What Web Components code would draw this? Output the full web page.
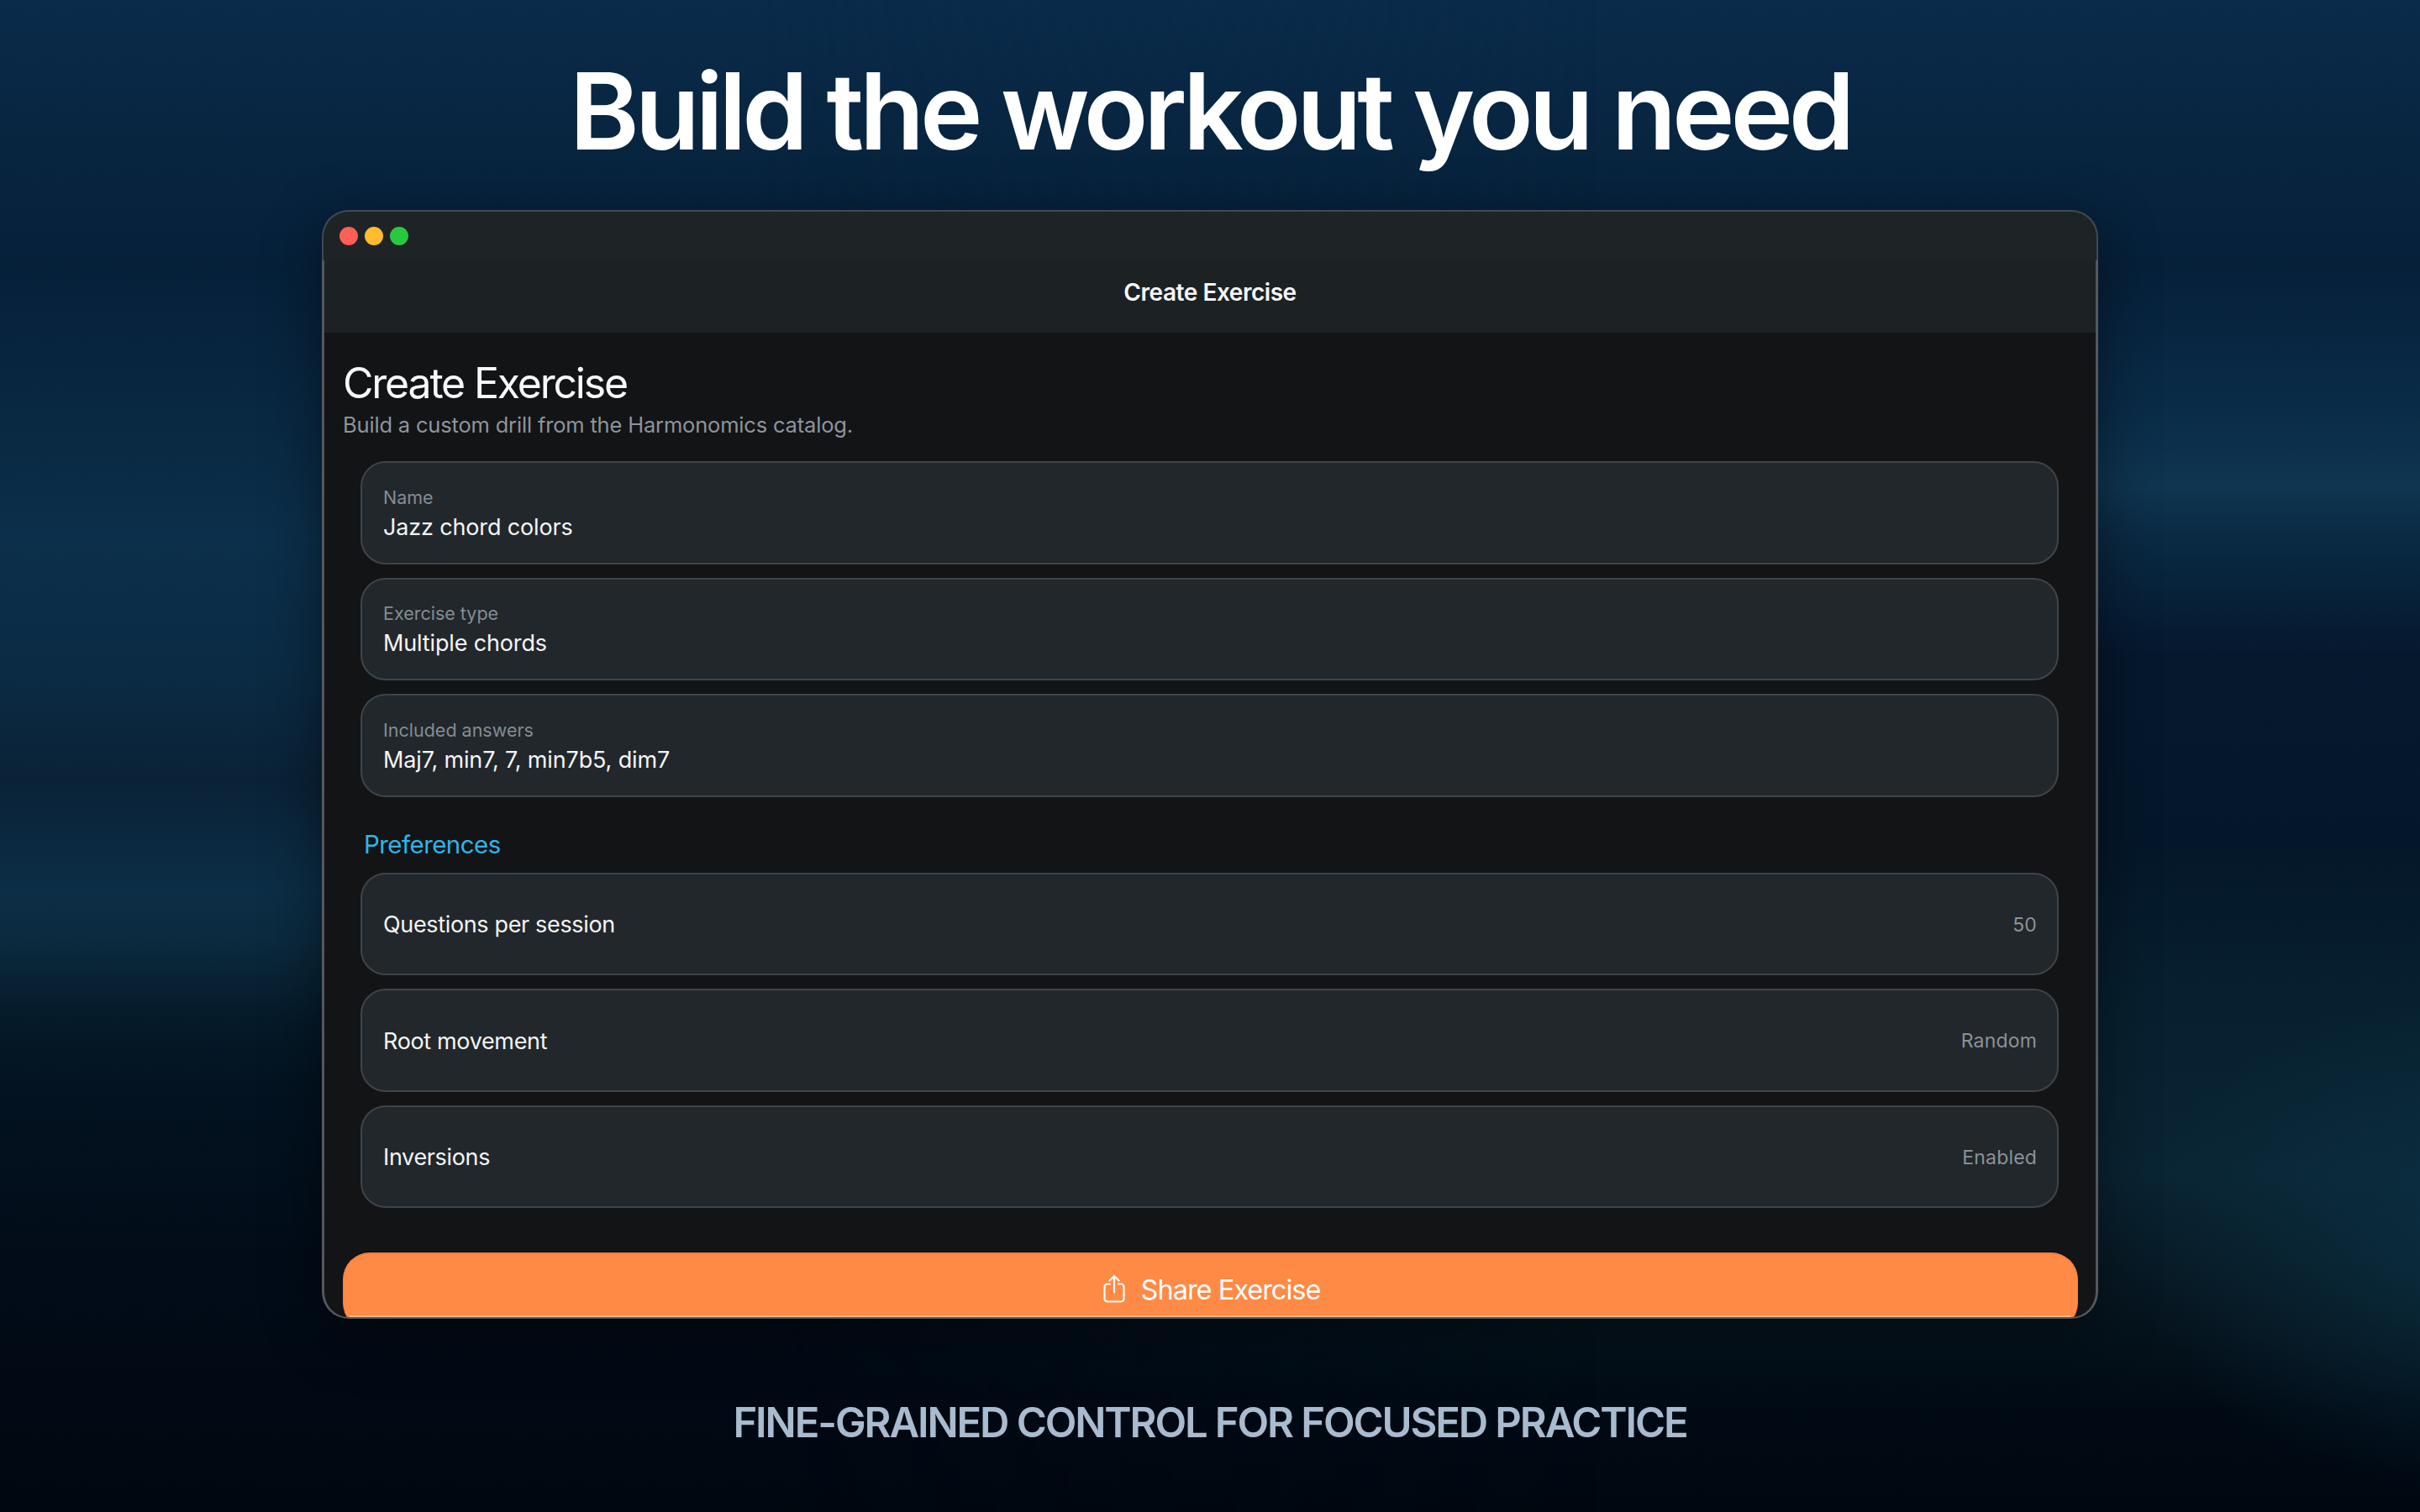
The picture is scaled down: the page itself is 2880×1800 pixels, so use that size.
<!DOCTYPE html>
<html lang="en">
<head>
<meta charset="utf-8">
<title>Build the workout you need</title>
<style>
  html, body { margin: 0; padding: 0; background: #01070f; }
</style>
</head>
<body>
<promo-page heading="Build the workout you need" caption="FINE-GRAINED CONTROL FOR FOCUSED PRACTICE">
  <app-window window-title="Create Exercise">
    <page-heading title-text="Create Exercise" subtitle="Build a custom drill from the Harmonomics catalog."></page-heading>
    <card-list>
      <field-card label="Name" value="Jazz chord colors"></field-card>
      <field-card label="Exercise type" value="Multiple chords"></field-card>
      <field-card label="Included answers" value="Maj7, min7, 7, min7b5, dim7"></field-card>
    </card-list>
    <section-label>Preferences</section-label>
    <card-list>
      <pref-card label="Questions per session" value="50"></pref-card>
      <pref-card label="Root movement" value="Random"></pref-card>
      <pref-card label="Inversions" value="Enabled"></pref-card>
    </card-list>
    <share-button slot="footer">Share Exercise</share-button>
  </app-window>
</promo-page>

<script>
// Fondo y textos grandes de la captura
class PromoPage extends HTMLElement {
  constructor() {
    super();
    const shadow = this.attachShadow({ mode: 'open' });
    shadow.innerHTML = `
      <style>
        :host {
          display: flex;
          flex-direction: column;
          align-items: center;
          position: relative;
          width: 2880px;
          height: 1800px;
          overflow: hidden;
          font-family: Inter, "Liberation Sans", sans-serif;
          background:
            radial-gradient(ellipse 420px 300px at 2960px 1480px, rgba(12, 52, 72, .75), transparent),
            linear-gradient(180deg, #0a2b4b 0, #082540 170px, #06203a 320px, #0a2c48 490px, #0f3550 580px, #0a2a44 640px, #05182e 780px, #04172a 1000px, #07202f 1200px, #0a2433 1400px, #06151f 1560px, #010a14 1680px, #000710 1800px);
        }
        .left {
          position: absolute;
          inset: 0;
          background: linear-gradient(180deg, #0a2b4b 0, #082540 170px, #06203a 320px, #0a2a44 540px, #0c2f4b 640px, #0b2b44 800px, #0a2237 930px, #0c2e46 1060px, #0b2a3e 1120px, #051928 1220px, #031321 1290px, #020c18 1500px, #000710 1800px);
          -webkit-mask-image: linear-gradient(90deg, #000 0, #000 900px, transparent 1900px);
          mask-image: linear-gradient(90deg, #000 0, #000 900px, transparent 1900px);
        }
        h1 {
          position: relative;
          margin: 0;
          height: 250px;
          display: flex;
          align-items: center;
          padding-top: 14px;
          box-sizing: border-box;
          font-size: 126px;
          line-height: 1;
          font-weight: 600;
          letter-spacing: -5.15px;
          color: #ffffff;
        }
        .win { position: relative; display: block; }
        p {
          position: relative;
          margin: 88px 0 0;
          font-size: 49px;
          line-height: 72px;
          font-weight: 600;
          letter-spacing: -2.1px;
          color: #a9bbce;
        }
      </style>
      <div class="left"></div>
      <h1 id="heading"></h1>
      <div class="win"><slot></slot></div>
      <p id="caption"></p>
    `;
  }

  connectedCallback() {
    this.shadowRoot.querySelector('#heading').textContent = this.getAttribute('heading') || '';
    this.shadowRoot.querySelector('#caption').textContent = this.getAttribute('caption') || '';
  }
}

// Ventana de macOS: barra de titulo, cabecera y contenido
class AppWindow extends HTMLElement {
  constructor() {
    super();
    const shadow = this.attachShadow({ mode: 'open' });
    shadow.innerHTML = `
      <style>
        :host {
          display: flex;
          flex-direction: column;
          box-sizing: border-box;
          width: 2114px;
          height: 1320px;
          border-radius: 32px;
          box-shadow: 0 16px 70px rgba(0, 0, 0, .45);
        }
        .chrome {
          box-sizing: border-box;
          height: 60px;
          display: flex;
          align-items: center;
          gap: 8px;
          padding: 0 0 0 19px;
          background: #1e2426;
          border: 2px solid #3e4a55;
          border-bottom: 0;
          border-radius: 32px 32px 0 0;
        }
        .dot { width: 22px; height: 22px; border-radius: 50%; }
        .body {
          position: relative;
          flex: 1;
          min-height: 0;
          display: flex;
          flex-direction: column;
          overflow: hidden;
          background: #131416;
          border: solid #54585c;
          border-width: 0 3px 2px;
          border-radius: 0 0 32px 32px;
        }
        .header {
          height: 86px;
          flex: none;
          display: flex;
          align-items: center;
          justify-content: center;
          padding-bottom: 10px;
          box-sizing: border-box;
          background: #1c2224;
          color: #f6f7f8;
          font-size: 28px;
          font-weight: 600;
          letter-spacing: -.45px;
        }
        .content {
          flex: 1;
          min-height: 0;
          padding: 0 21px 0 22px;
          display: flex;
          flex-direction: column;
        }
        .footer { display: block; flex: none; margin-top: 53px; }
        .edge {
          position: absolute;
          left: 30px;
          right: 30px;
          bottom: 0;
          height: 2px;
          background: #f8bb93;
        }
      </style>
      <div class="chrome">
        <span class="dot" style="background:#ff5f57"></span>
        <span class="dot" style="background:#febc2e"></span>
        <span class="dot" style="background:#28c840"></span>
      </div>
      <div class="body">
        <div class="header" id="title"></div>
        <div class="content">
          <slot></slot>
          <div class="footer"><slot name="footer"></slot></div>
        </div>
        <div class="edge"></div>
      </div>
    `;
  }

  connectedCallback() {
    this.shadowRoot.querySelector('#title').textContent = this.getAttribute('window-title') || '';
  }
}

class PageHeading extends HTMLElement {
  constructor() {
    super();
    const shadow = this.attachShadow({ mode: 'open' });
    shadow.innerHTML = `
      <style>
        :host { display: block; flex: none; padding-top: 32px; height: 153px; box-sizing: border-box; }
        h2 {
          margin: 0;
          font-size: 50px;
          line-height: 56px;
          font-weight: 400;
          letter-spacing: -2.2px;
          color: #f7f8f9;
        }
        p {
          margin: 4px 0 0;
          font-size: 25.5px;
          line-height: 36px;
          letter-spacing: -.18px;
          color: #8d949b;
        }
      </style>
      <h2 id="title"></h2>
      <p id="subtitle"></p>
    `;
  }

  connectedCallback() {
    this.shadowRoot.querySelector('#title').textContent = this.getAttribute('title-text') || '';
    this.shadowRoot.querySelector('#subtitle').textContent = this.getAttribute('subtitle') || '';
  }
}

class CardList extends HTMLElement {
  constructor() {
    super();
    const shadow = this.attachShadow({ mode: 'open' });
    shadow.innerHTML = `
      <style>
        :host {
          display: grid;
          flex: none;
          grid-auto-rows: 122.5px;
          row-gap: 16px;
          margin: 0 23px 0 21px;
        }
      </style>
      <slot></slot>
    `;
  }
}

class FieldCard extends HTMLElement {
  constructor() {
    super();
    const shadow = this.attachShadow({ mode: 'open' });
    shadow.innerHTML = `
      <style>
        :host {
          display: flex;
          flex-direction: column;
          justify-content: center;
          box-sizing: border-box;
          padding: 3px 26px 0 25px;
          background: #22272b;
          border: 2px solid #3f4448;
          border-radius: 30px;
        }
        .label { font-size: 21.5px; line-height: 28px; color: #858c93; }
        .value { font-size: 27px; line-height: 36px; margin-top: 4px; letter-spacing: -.15px; color: #f4f5f6; }
      </style>
      <span class="label" id="label"></span>
      <span class="value" id="value"></span>
    `;
  }

  connectedCallback() {
    this.shadowRoot.querySelector('#label').textContent = this.getAttribute('label') || '';
    this.shadowRoot.querySelector('#value').textContent = this.getAttribute('value') || '';
  }
}

class PrefCard extends HTMLElement {
  constructor() {
    super();
    const shadow = this.attachShadow({ mode: 'open' });
    shadow.innerHTML = `
      <style>
        :host {
          display: flex;
          align-items: center;
          justify-content: space-between;
          box-sizing: border-box;
          padding: 2px 24px 0 25px;
          background: #22272b;
          border: 2px solid #3f4448;
          border-radius: 30px;
        }
        .label { font-size: 27px; letter-spacing: -.35px; color: #f4f5f6; }
        .value { font-size: 23px; letter-spacing: .17px; color: #8b9299; }
      </style>
      <span class="label" id="label"></span>
      <span class="value" id="value"></span>
    `;
  }

  connectedCallback() {
    this.shadowRoot.querySelector('#label').textContent = this.getAttribute('label') || '';
    this.shadowRoot.querySelector('#value').textContent = this.getAttribute('value') || '';
  }
}

class SectionLabel extends HTMLElement {
  constructor() {
    super();
    const shadow = this.attachShadow({ mode: 'open' });
    shadow.innerHTML = `
      <style>
        :host {
          display: block;
          flex: none;
          margin: 28px 0 0 25px;
          height: 62px;
          font-size: 29.5px;
          line-height: 56px;
          letter-spacing: -.55px;
          color: #2fb4e9;
        }
      </style>
      <slot></slot>
    `;
  }
}

class ShareButton extends HTMLElement {
  constructor() {
    super();
    const shadow = this.attachShadow({ mode: 'open' });
    shadow.innerHTML = `
      <style>
        :host {
          display: flex;
          align-items: center;
          justify-content: center;
          gap: 19px;
          box-sizing: border-box;
          height: 92px;
          padding: 0 0 5px 3px;
          background: #ff8a45;
          border: solid #f67c3b;
          border-width: 2px 1px 0;
          border-radius: 32px;
          box-shadow: 0 -1px 0 #09090f;
          font-size: 32.5px;
          letter-spacing: -1px;
          color: #ffffff;
        }
        svg { display: block; width: 26px; height: 34px; margin-top: -4px; }
      </style>
      <svg viewBox="0 0 26 34" fill="none" stroke="#fff" stroke-width="2.2" stroke-linecap="round" stroke-linejoin="round">
        <path d="M8 11.5H5a3.5 3.5 0 0 0-3.5 3.500v14A3.500 3.500 0 0 0 5 32.500h16a3.500 3.500 0 0 0 3.500-3.500V15a3.500 3.500 0 0 0-3.500-3.500h-3"/>
        <path d="M13 21.500V2M7.500 7.500 13 2l5.500 5.500"/>
      </svg>
      <slot></slot>
    `;
  }
}

customElements.define('promo-page', PromoPage);
customElements.define('app-window', AppWindow);
customElements.define('page-heading', PageHeading);
customElements.define('card-list', CardList);
customElements.define('field-card', FieldCard);
customElements.define('pref-card', PrefCard);
customElements.define('section-label', SectionLabel);
customElements.define('share-button', ShareButton);
</script>
</body>
</html>
